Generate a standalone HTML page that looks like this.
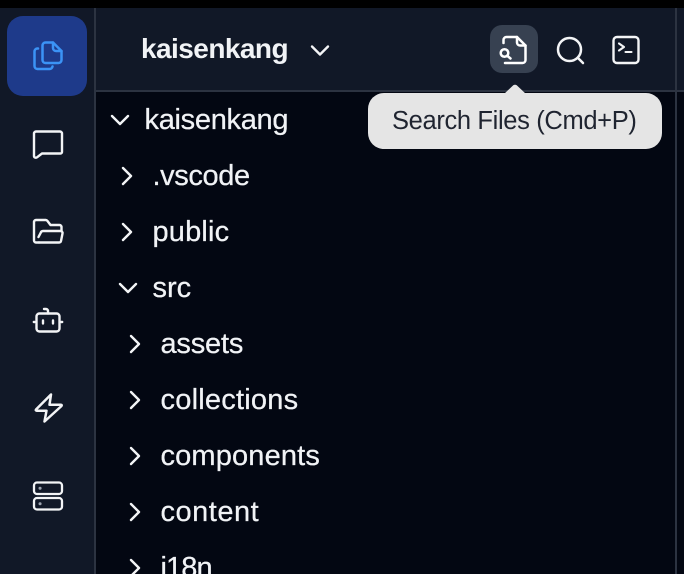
<!DOCTYPE html>
<html><head><meta charset="utf-8"><style>
html,body{margin:0;padding:0;background:#02050f}
#r{position:relative;width:684px;height:574px;overflow:hidden;background:#030712;font-family:"Liberation Sans",sans-serif;color:#f3f4f6}
.a{position:absolute}
.t{position:absolute;font-size:29px;line-height:34px;white-space:nowrap;color:#f1f3f6;-webkit-text-stroke:.25px #f1f3f6}
svg{position:absolute;overflow:visible;fill:none;stroke-linecap:round;stroke-linejoin:round}
</style></head><body><div id="r">
<div class="a" style="left:0;top:0;width:684px;height:8px;background:#000"></div>
<div class="a" style="left:0;top:8px;width:94px;height:566px;background:#111827"></div>
<div class="a" style="left:94px;top:8px;width:2px;height:566px;background:#2c3341"></div>
<div class="a" style="left:96px;top:8px;width:588px;height:82px;background:#111827"></div>
<div class="a" style="left:96px;top:90px;width:588px;height:2px;background:#2c3341"></div>
<div class="a" style="left:675px;top:8px;width:2px;height:566px;background:#2c3341"></div>

<div class="a" style="left:7px;top:16px;width:80px;height:80px;border-radius:16px;background:#1e3a8a"></div>
<svg style="left:32px;top:39px" width="32" height="32" viewBox="0 0 32 32" stroke="#3b93f6" stroke-width="2.500"><path d="M13.500 3.500H21l8.500 8.500v9a3 3 0 0 1-3 3h-13a3 3 0 0 1-3-3V6.500a3 3 0 0 1 3-3Z"/><path d="M21 3.500V9a3 3 0 0 0 3 3h5.500"/><path d="M6 9.500H5.500a3 3 0 0 0-3 3V27a3 3 0 0 0 3 3H17.500a3 3 0 0 0 3-2.500"/></svg>
<svg style="left:32px;top:129px" width="32" height="32" viewBox="0 0 32 32" stroke="#f3f4f6" stroke-width="2.400"><path d="M2 4.500a2 2 0 0 1 2-2h24a2 2 0 0 1 2 2V23a1.500 1.500 0 0 1-1.500 1.500H10l-5 3.800c-1.300.9-3 .2-3-1.300Z"/></svg>
<svg style="left:32px;top:216px" width="32" height="32" viewBox="0 0 32 32" stroke="#f3f4f6" stroke-width="2.400"><path d="M7 26.500h20a2 2 0 0 0 2-1.500l1.500-7.500a2 2 0 0 0-2-2.500H11a2.500 2.500 0 0 0-2.300 1.800L6.500 21"/><path d="M29.500 14.500V11a2 2 0 0 0-2-2h-9l-3-4c-.5-.6-1-1-1.800-1H4a2 2 0 0 0-2 2v18.500a2 2 0 0 0 2 2h3"/></svg>
<svg style="left:32px;top:304px" width="32" height="32" viewBox="0 0 32 32" stroke="#f3f4f6" stroke-width="2.400"><rect x="4.500" y="9.500" width="23" height="18" rx="3"/><path d="M16 9.500V7a2 2 0 0 0-2-2h-2"/><path d="M1.800 18h1M29.200 18h1M11 16.500v3M21 16.500v3"/></svg>
<svg style="left:32px;top:392px" width="32" height="32" viewBox="0 0 32 32" stroke="#f3f4f6" stroke-width="2.500"><path d="M19 2.500 4 17.500c-.5.600-.2 1.200.7 1.200H14.500L12.500 29.500 29.500 14c.6-.6.200-1.300-.7-1.300H17.500Z"/></svg>
<svg style="left:32px;top:480px" width="32" height="32" viewBox="0 0 32 32" stroke="#f3f4f6" stroke-width="2.300"><rect x="2" y="2.500" width="28" height="11.500" rx="3"/><rect x="2" y="18" width="28" height="11.500" rx="3"/><path d="M8 8.300h.1M8 23.800h.1" stroke="#9ca3af" stroke-width="3"/></svg>

<div class="t" style="left:141px;top:32px;font-size:28px;font-weight:700;letter-spacing:-.55px;-webkit-text-stroke:0">kaisenkang</div>
<svg style="left:310px;top:40px" width="20" height="20" viewBox="0 0 20 20" stroke="#f3f4f6" stroke-width="2.400"><path d="M2 6.500l8 8 8-8"/></svg>

<div class="a" style="left:490px;top:25px;width:48px;height:48px;border-radius:12px;background:#374151"></div>
<svg style="left:498px;top:34px" width="32" height="32" viewBox="0 0 32 32" stroke="#fff" stroke-width="2.500"><path d="M5.500 9V6a3 3 0 0 1 3-3H19l8.500 8.500V26a3 3 0 0 1-3 3H7"/><path d="M19 3v5.500a3 3 0 0 0 3 3h5.500"/><circle cx="6.500" cy="19" r="3.800"/><path d="m9.500 22 3 2.500"/></svg>
<svg style="left:555px;top:35px" width="30" height="30" viewBox="0 0 30 30" stroke="#f3f4f6" stroke-width="2.500"><circle cx="14.500" cy="14.500" r="11.500"/><path d="m23 23 5 5"/></svg>
<svg style="left:611px;top:35px" width="30" height="30" viewBox="0 0 30 30" stroke="#f3f4f6" stroke-width="2.400"><rect x="2.500" y="2" width="25" height="26" rx="3.500"/><path d="m8 8.500 5 3.500-5 3.500M14.500 17h6" stroke-width="2.100"/></svg>

<div class="t" style="left:144.500px;top:103px;letter-spacing:-.3px">kaisenkang</div>
<svg style="left:110px;top:110px" width="20" height="20" viewBox="0 0 20 20" stroke="#f3f4f6" stroke-width="2.400"><path d="M2 6l8 8 8-8"/></svg>
<div class="t" style="left:152.500px;top:159px;letter-spacing:-.38px">.vscode</div>
<svg style="left:118px;top:166px" width="20" height="20" viewBox="0 0 20 20" stroke="#f3f4f6" stroke-width="2.400"><path d="M5 2l8 8-8 8"/></svg>
<div class="t" style="left:152.500px;top:215px;letter-spacing:.17px">public</div>
<svg style="left:118px;top:222px" width="20" height="20" viewBox="0 0 20 20" stroke="#f3f4f6" stroke-width="2.400"><path d="M5 2l8 8-8 8"/></svg>
<div class="t" style="left:152.500px;top:271px">src</div>
<svg style="left:118px;top:278px" width="20" height="20" viewBox="0 0 20 20" stroke="#f3f4f6" stroke-width="2.400"><path d="M2 6l8 8 8-8"/></svg>
<div class="t" style="left:160.500px;top:327px;letter-spacing:-.2px">assets</div>
<svg style="left:126px;top:334px" width="20" height="20" viewBox="0 0 20 20" stroke="#f3f4f6" stroke-width="2.400"><path d="M5 2l8 8-8 8"/></svg>
<div class="t" style="left:160.500px;top:383px;letter-spacing:.22px">collections</div>
<svg style="left:126px;top:390px" width="20" height="20" viewBox="0 0 20 20" stroke="#f3f4f6" stroke-width="2.400"><path d="M5 2l8 8-8 8"/></svg>
<div class="t" style="left:160.500px;top:439px;letter-spacing:.15px">components</div>
<svg style="left:126px;top:446px" width="20" height="20" viewBox="0 0 20 20" stroke="#f3f4f6" stroke-width="2.400"><path d="M5 2l8 8-8 8"/></svg>
<div class="t" style="left:160.500px;top:495px;letter-spacing:.5px">content</div>
<svg style="left:126px;top:502px" width="20" height="20" viewBox="0 0 20 20" stroke="#f3f4f6" stroke-width="2.400"><path d="M5 2l8 8-8 8"/></svg>
<div class="t" style="left:160.500px;top:551px;letter-spacing:-.9px">i18n</div>
<svg style="left:126px;top:558px" width="20" height="20" viewBox="0 0 20 20" stroke="#f3f4f6" stroke-width="2.400"><path d="M5 2l8 8-8 8"/></svg>

<div class="a" style="left:368px;top:93px;width:294px;height:56px;border-radius:16px;background:#e5e5e5"></div>
<svg style="left:504px;top:84px;stroke:none" width="22" height="10" viewBox="0 0 22 10"><path d="M0 10 9 1.500c1-1 3-1 4 0L22 10Z" fill="#e5e5e5"/></svg>
<div class="t" style="left:392px;top:104px;font-size:25.500px;color:#1f2430;-webkit-text-stroke:0;line-height:34px;letter-spacing:-.35px">Search Files (Cmd+P)</div>
</div></body></html>
